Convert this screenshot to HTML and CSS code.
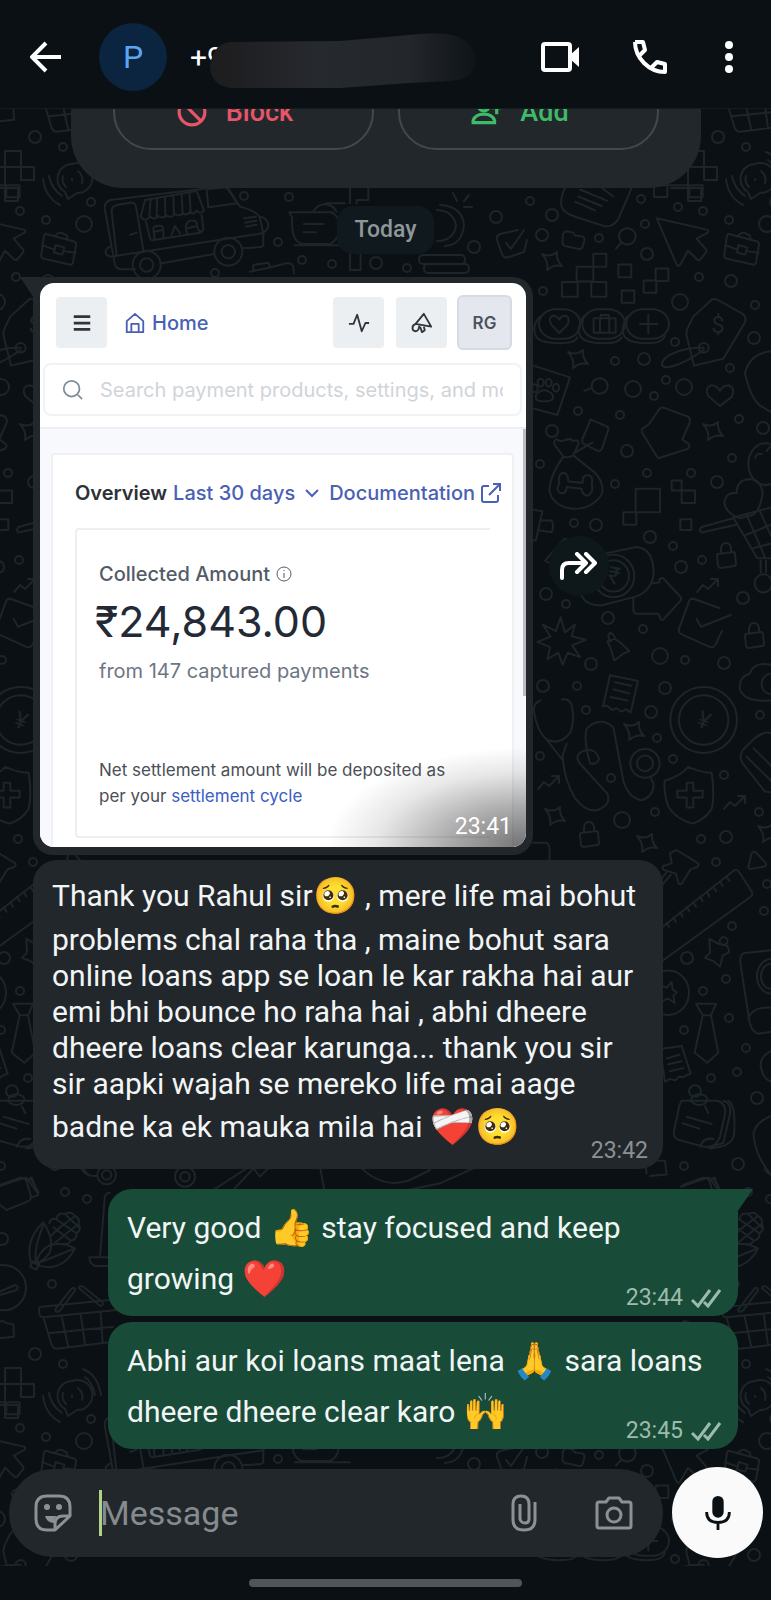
FILE: index.html
```
<!doctype html>
<html lang="en">
<head>
    <meta charset="UTF-8">
    <meta name="viewport" content="width=device-width, initial-scale=1.0">
    <title>Chat</title>
    <link rel="stylesheet" href="styles.css">
</head>
<body>
<header class="topbar">
    <button class="icon-btn" aria-label="Back">
        <svg class="icon-back" viewBox="0 0 32 32"><path d="M31 16H3M16 2L2 16l14 14"/></svg>
    </button>
    <span class="avatar">P</span>
    <h1 class="contact">
        <span>+9</span>
        <svg class="smudge" viewBox="0 0 270 56" aria-hidden="true">
            <defs>
                <linearGradient id="smudge-fill">
                    <stop offset="0" stop-color="#1d1c1f"/>
                    <stop offset=".4" stop-color="#26292e"/>
                    <stop offset=".75" stop-color="#23262a"/>
                    <stop offset="1" stop-color="#0e1418"/>
                </linearGradient>
            </defs>
            <path fill="url(#smudge-fill)" d="M24 9L130 8L210 1Q262-4 266 26Q266 46 240 48L200 50L130 55H22Q0 53 0 32Q4 8 24 9Z"/>
        </svg>
    </h1>
    <nav class="actions">
        <button class="icon-btn" aria-label="Video call">
            <svg class="icon-video" viewBox="0 0 38 30">
                <rect x="2" y="2" width="27" height="26" rx="2"/>
                <path class="solid" d="M29 13l9-8v20l-9-8z"/>
            </svg>
        </button>
        <button class="icon-btn" aria-label="Voice call">
            <svg class="icon-phone" viewBox="0 0 34 34"><path d="M2 2H10L12 10L7 15M2 2Q2 14 11 23Q20 32 32 32V24L24 22L19 27"/></svg>
        </button>
        <button class="icon-btn more" aria-label="More options">
            <svg class="icon-dots" viewBox="0 0 8 32"><circle cx="4" cy="4" r="4"/><circle cx="4" cy="16" r="4"/><circle cx="4" cy="28" r="4"/></svg>
        </button>
    </nav>
</header>

<main class="conversation">
    <svg class="wallpaper" aria-hidden="true">
        <defs>
            <path id="star" d="M-10-7Q-2-3 5-9Q4-1 10 5Q2 3-5 9Q-3 1-10-7Z"/>
            <path id="lock" d="M-8-4L7-6Q9-6 9-4L10 6Q10 8 8 8L-5 10Q-7 10-8 8L-9-2Q-9-4-8-4M-5-5V-10Q-4-15 0-15T5-10L5-6"/>
            <path id="trend" d="M-11 7L-5 0L0 4L10-6M3-6L10-6L10 1"/>
            <g id="doodles">
                <!-- small dots -->
                <g>
                    <circle cx="530" cy="201" r="4"/><circle cx="641" cy="199" r="4"/><circle cx="678" cy="207" r="4"/>
                    <circle cx="703" cy="211" r="4"/><circle cx="645" cy="224" r="4"/><circle cx="729" cy="220" r="4"/>
                    <circle cx="599" cy="238" r="4"/><circle cx="543" cy="291" r="4"/><circle cx="699" cy="277" r="4"/>
                    <circle cx="755" cy="305" r="4"/><circle cx="675" cy="342" r="4"/><circle cx="615" cy="361" r="4"/>
                    <circle cx="666" cy="380" r="4"/><circle cx="654" cy="396" r="4"/><circle cx="730" cy="368" r="4"/>
                    <circle cx="578" cy="411" r="4"/><circle cx="620" cy="415" r="4"/><circle cx="739" cy="419" r="4"/>
                    <circle cx="540" cy="464" r="4"/><circle cx="615" cy="484" r="4"/><circle cx="647" cy="473" r="4"/>
                    <circle cx="691" cy="473" r="4"/><circle cx="732" cy="458" r="4"/><circle cx="574" cy="523" r="4"/>
                    <circle cx="673" cy="546" r="4"/><circle cx="702" cy="560" r="4"/><circle cx="566" cy="604" r="4"/>
                    <circle cx="643" cy="629" r="4"/><circle cx="685" cy="660" r="4"/><circle cx="577" cy="686" r="4"/>
                    <circle cx="586" cy="710" r="4"/><circle cx="657" cy="738" r="4"/><circle cx="540" cy="756" r="4"/>
                    <circle cx="673" cy="759" r="4"/><circle cx="611" cy="778" r="4"/><circle cx="724" cy="775" r="4"/>
                    <circle cx="655" cy="812" r="4"/><circle cx="760" cy="715" r="4"/><circle cx="759" cy="812" r="4"/>
                    <circle cx="701" cy="839" r="4"/><circle cx="716" cy="862" r="4"/><circle cx="767" cy="884" r="4"/>
                    <circle cx="764" cy="911" r="4"/><circle cx="732" cy="926" r="4"/><circle cx="726" cy="979" r="4"/>
                    <circle cx="703" cy="991" r="4"/><circle cx="729" cy="1018" r="4"/><circle cx="684" cy="1030" r="4"/>
                    <circle cx="746" cy="1048" r="4"/><circle cx="737" cy="1072" r="4"/><circle cx="711" cy="1078" r="4"/>
                    <circle cx="684" cy="1166" r="4"/><circle cx="65" cy="1192" r="4"/><circle cx="87" cy="1199" r="4"/>
                    <circle cx="52" cy="1284" r="4"/><circle cx="63" cy="147" r="4"/><circle cx="91" cy="202" r="4"/>
                    <circle cx="244" cy="196" r="4"/><circle cx="289" cy="197" r="4"/><circle cx="278" cy="242" r="4"/>
                    <circle cx="302" cy="260" r="4"/><circle cx="332" cy="264" r="4"/><circle cx="407" cy="268" r="4"/>
                    <circle cx="215" cy="273" r="4"/>
                </g>
                <g>
                    <circle cx="552" cy="215" r="6"/><circle cx="542" cy="235" r="6"/><circle cx="647" cy="254" r="6"/>
                    <circle cx="731" cy="281" r="6"/><circle cx="644" cy="359" r="6"/><circle cx="754" cy="338" r="6"/>
                    <circle cx="552" cy="431" r="6"/><circle cx="627" cy="451" r="6"/><circle cx="717" cy="482" r="6"/>
                    <circle cx="763" cy="428" r="6"/><circle cx="596" cy="525" r="6"/><circle cx="650" cy="537" r="6"/>
                    <circle cx="681" cy="567" r="6"/><circle cx="546" cy="594" r="6"/><circle cx="608" cy="618" r="6"/>
                    <circle cx="743" cy="598" r="6"/><circle cx="591" cy="664" r="6"/><circle cx="724" cy="663" r="6"/>
                    <circle cx="543" cy="686" r="6"/><circle cx="665" cy="688" r="6"/><circle cx="651" cy="712" r="6"/>
                    <circle cx="726" cy="837" r="6"/><circle cx="687" cy="958" r="6"/><circle cx="757" cy="1098" r="6"/>
                    <circle cx="738" cy="1164" r="6"/><circle cx="35" cy="137" r="6"/><circle cx="376" cy="263" r="6"/>
                    <circle cx="496" cy="217" r="6"/><circle cx="474" cy="247" r="6"/><circle cx="2" cy="1239" r="6"/>
                    <circle cx="680" cy="302" r="8"/><circle cx="633" cy="389" r="8"/><circle cx="684" cy="387" r="8"/>
                    <circle cx="660" cy="656" r="8"/><circle cx="622" cy="820" r="8"/><circle cx="84" cy="224" r="8"/>
                </g>

                <use href="#star" x="552" y="261"/><use href="#star" x="578" y="359"/><use href="#star" x="713" y="431"/>
                <use href="#star" x="634" y="731"/><use href="#star" x="555" y="816"/><use href="#star" x="647" y="843"/>
                <use href="#star" x="768" y="833"/>
                <use href="#lock" x="726" y="558"/><use href="#lock" x="754" y="638"/><use href="#lock" x="589" y="837"/>
                <use href="#trend" x="708" y="585"/><use href="#trend" x="549" y="782"/><use href="#trend" x="735" y="802"/>

                <!-- speech bubble with sound waves -->
                <path d="M72 164A15 15 0 1 1 77 193L68 199L65 192A15 15 0 0 1 72 164M78 171q6 5 4 12M66 187q-5-5-3-11M72 179v1M43 179Q45 197 60 205M49 176Q51 188 62 196M83 152Q98 158 101 178M85 160Q93 166 95 178"/>

                <!-- shelf of pixels -->
                <path d="M5 151H21V167H5ZM21 167H34V180H21ZM5 188H18V201H5ZM-12 167H5M-12 188H5V167"/>

                <!-- food van, cup -->
                <g class="thin" transform="translate(20 100) scale(.3333)">
                    <path d="M270 300Q250 310 255 330L285 495Q290 508 305 508H345M270 300L620 258L660 320Q715 335 720 355L730 400V435Q728 442 715 442L668 445M425 490L582 462"/>
                    <path d="M290 468L275 335Q275 318 290 315L330 308Q345 306 348 320L370 450M272 470L728 400M330 405L350 398M560 268L620 262L652 310L565 322ZM270 440Q250 450 260 465L272 470"/>
                    <path d="M375 300L530 273L552 332Q540 345 530 332Q520 345 508 337Q500 348 488 340Q478 352 465 342Q455 356 440 346Q430 358 415 348Q405 362 390 350Q375 368 362 350ZM392 297L388 350M412 294L410 348M435 290L436 346M460 286L462 342M485 282L488 340M508 278L512 337"/>
                    <path d="M378 365L390 415Q392 422 402 420L540 398Q550 395 550 385L545 345M404 418L400 385Q402 375 425 378Q432 385 430 412M402 395L428 390M455 405L465 378L480 400M502 402Q490 372 510 362Q535 360 530 378L540 396M502 385L530 378M672 355L708 350M675 368L710 362M678 380L710 374M720 350Q745 355 745 378Q740 395 728 398"/>
                    <circle cx="380" cy="495" r="42"/><circle cx="380" cy="495" r="20"/>
                    <circle cx="625" cy="455" r="42"/><circle cx="625" cy="455" r="20"/>
                    <path d="M808 337H940M808 337L816 352Q815 400 825 415Q835 432 850 432H930Q952 420 955 400V360Q950 345 935 338M825 436H990M852 372H910M850 397H888M880 335Q890 315 915 312Q940 315 950 335M920 310H975"/>
                    <path d="M990 265V310M990 460V510H1022V460M1010 310V300H1045V265M690 515L740 505L800 490Q815 488 820 500L822 520M700 508V495L745 488L750 500"/>
                </g>
                <path d="M440 205Q462 206 464 225Q462 245 445 246M437 210Q454 211 456 226Q453 241 437 241M453 193l4 8M469 195l-5 6M472 207h-8"/>
                <rect x="419" y="255" width="46" height="9" rx="4"/><rect x="424" y="264" width="45" height="9" rx="4"/>
                <path d="M518 230L500 234Q496 236 497 240L502 254Q504 259 509 257L524 252L527 240M506 243L511 249L524 230"/>

                <!-- shopping, pets, finance -->
                <g class="thin" transform="translate(520 180) scale(.3333 .4337)">
                    <path d="M135 18C110 60 125 75 170 86L255 107Q285 108 298 85L335 18M175 38L245 60M165 50L225 70M180 22L262 48M240 15L280 38"/>
                    <path d="M128 128Q130 118 143 118L160 122L165 128L187 130Q195 132 193 140L188 154Q186 160 178 159L135 152Q126 150 128 143Z"/>
                    <ellipse cx="322" cy="130" rx="25" ry="19"/><path d="M305 144L288 158"/>
                    <path d="M410 88L563 115Q568 118 562 122L530 135L558 160Q562 165 555 170L540 184Q534 186 530 182L504 163L480 196Q474 200 470 195Z"/>
                    <path d="M625 124L712 142Q719 144 717 150L708 190Q705 197 698 195L618 181Q611 179 613 172L621 128ZM615 150L650 160M680 164L716 168M656 150L682 156L676 172L651 167ZM655 128Q665 118 680 124L690 128L692 138"/>
                    <path d="M220 170H259V200H220ZM170 200H220V234H170ZM126 235H173V269H126ZM214 235H259V269H214ZM295 195H334V224H295ZM305 255H343V283H305ZM407 204H445V233H407ZM371 232H409V260H371ZM402 12H442V39H402ZM508 12H548V40H508ZM442 12H508"/>
                    <path d="M347 712H420V766H347ZM310 766H349V795H310ZM455 693H485V716H455ZM485 716H525V745H485ZM481 782H514V807H481Z"/>
                    <rect x="57" y="298" width="124" height="68" rx="50" ry="34"/><rect x="187" y="298" width="128" height="68" rx="50" ry="34"/><rect x="319" y="298" width="128" height="68" rx="50" ry="34"/>
                    <path d="M60 315Q30 340 52 365Q70 378 130 376Q165 376 172 363M190 315Q165 345 184 363Q200 378 260 376Q295 376 305 363M322 315Q297 345 316 363Q332 378 392 376Q425 376 435 360"/>
                    <path d="M118 353L94 334Q84 318 98 313Q112 312 118 322Q124 312 138 313Q152 318 142 334ZM221 319H287V352H221ZM240 319V352M268 319V352M242 319V311H266V319M385 310V354M360 332H412"/>
                    <path d="M520 315L575 276Q585 272 597 278L667 308Q680 315 675 328L610 412L522 428L500 360Q497 350 505 338ZM551 387C500 385 430 400 425 425C430 440 480 430 551 392"/>
                    <ellipse cx="551" cy="387" rx="15" ry="11"/>
                    <path d="M40 428L150 455L112 542L40 527M48 495Q72 475 98 495Q105 512 72 510Q42 512 48 495Z"/>
                    <ellipse cx="62" cy="467" rx="9" ry="9"/><ellipse cx="86" cy="467" rx="9" ry="9"/><ellipse cx="44" cy="480" rx="9" ry="9"/><ellipse cx="108" cy="479" rx="9" ry="9"/>
                    <ellipse cx="239" cy="475" rx="24" ry="18"/><path d="M215 480L193 486"/>
                    <path d="M600 521L565 498Q553 480 572 474Q590 472 600 486Q610 472 628 474Q647 480 635 500Z"/>
                    <path d="M212 552L260 568Q268 572 264 578L246 620Q240 627 232 624L190 608Q184 603 188 596ZM130 638L105 612Q98 600 110 598Q122 605 135 600Q150 594 160 602Q175 596 176 608L160 635Q200 660 225 675Q255 700 245 725Q215 760 155 758Q95 750 88 715Q90 680 130 638Q145 642 160 635M162 630L218 605"/>
                    <path d="M145 695L188 698Q185 682 202 680Q222 682 215 700Q222 720 205 727Q188 730 185 712L140 708Q138 725 122 722Q105 715 118 700Q112 680 128 675Q145 675 145 695Z"/>
                    <path d="M365 575L388 562L418 528Q425 522 435 526L505 546Q512 552 509 560L487 598L508 610Q510 618 500 621L422 640Q415 643 410 637L366 582Z"/>
                    <ellipse cx="737" cy="655" rx="52" ry="48"/><path d="M706 640Q712 628 725 632M740 625L750 615"/>
                    <path d="M660 780Q620 770 613 745Q618 718 650 722Q650 690 690 690Q725 690 728 725Q720 760 700 772Z"/>
                    <path d="M640 778L712 872H753M640 778L753 755M648 795L545 813Q535 808 545 800L640 780M722 878V905M738 878V905M672 820L753 795M695 850L753 838M680 772L735 870M720 764L753 820"/>
                    <ellipse cx="730" cy="930" rx="26" ry="21"/>
                    <path d="M200 870L350 846Q400 850 401 905Q398 945 350 960L250 980Q180 985 175 930M75 878L130 830Q135 826 140 828M75 878L120 895"/>
                    <ellipse cx="281" cy="913" rx="62" ry="49"/><ellipse cx="281" cy="913" rx="46" ry="36"/>
                    <path d="M340 965V992Q342 1000 350 1000H415L422 1012Q428 1018 434 1010L482 970Q486 966 480 960L432 920Q425 914 418 922V928L398 930"/>
                    <path d="M598 987L522 966Q512 963 507 972L477 1035Q474 1043 484 1047L570 1077Q580 1079 586 1072L606 1040M530 1012L543 1030L633 1003"/>
                    <path d="M122 1008L135 1043L165 1025L155 1052L197 1060L157 1073L180 1100L143 1090L128 1118L115 1090L82 1105L90 1077L52 1065L92 1053L68 1025L108 1040Z"/>
                    <path d="M272 1064Q258 1048 272 1044Q285 1050 285 1058L300 1066L328 1086L310 1092L283 1108L272 1080L262 1064L285 1058"/>
                    <path d="M270 1142L354 1155L332 1228L318 1220L305 1226L290 1218L276 1222L262 1212L249 1214ZM285 1158L334 1166M280 1174L328 1184M272 1192L322 1200"/>
                    <ellipse cx="551" cy="1245" rx="100" ry="76"/><ellipse cx="551" cy="1245" rx="74" ry="57"/>
                    <path d="M62 1200Q40 1205 42 1225Q50 1270 80 1290Q120 1305 150 1275Q165 1250 155 1210Q145 1195 125 1198M80 1290L125 1335L140 1300M128 1325Q130 1380 165 1425Q200 1460 235 1452Q275 1440 262 1415L185 1350Q160 1330 185 1318Q225 1305 237 1335Q230 1350 210 1345Q190 1290 200 1265Q240 1235 280 1262L310 1385Q325 1425 365 1430Q405 1420 400 1390L390 1375"/>
                    <ellipse cx="375" cy="1345" rx="44" ry="33"/><ellipse cx="375" cy="1345" rx="24" ry="18"/>
                    <path d="M505 1353Q545 1367 575 1367Q585 1420 575 1450Q555 1475 518 1484Q470 1475 445 1445Q430 1410 434 1385Q480 1375 505 1353ZM500 1390H520V1408H548V1424H520V1447H500V1424H472V1408H500Z"/>
                    <path d="M753 1118Q700 1110 690 1138Q655 1145 660 1175Q675 1205 753 1200M753 1275Q730 1270 700 1290L668 1315Q655 1330 668 1345L735 1410L753 1412M680 1330L753 1385M700 1310L753 1350"/>
                    <ellipse cx="755" cy="1162" rx="30" ry="24"/>
                    <path d="M38 760L67 764L48 830L38 832M62 785H95Q103 800 95 812L60 808M753 395Q690 400 675 445Q690 500 720 520L753 535M38 1528H80Q92 1530 88 1568"/>
                </g>
                <text x="718" y="333">$</text>
                <text x="614" y="584" transform="rotate(10 614 576)">₹</text>
                <text x="704" y="729" transform="rotate(20 704 721)">¥</text>

                <!-- office -->
                <g class="thin" transform="translate(640 850) scale(.3333 .3827)">
                    <path d="M90 8L110 0L175 35Q178 42 170 45L152 50L125 88Q118 92 115 85L108 62L72 52Q64 48 70 42L95 35ZM92 65L60 98M80 58L56 84"/>
                    <path d="M-120 330L280 55Q288 50 295 55L335 108Q340 118 332 122L-60 370M80 190l8 12M100 176l8 12M120 162l8 12M140 149l8 12M160 136l8 12M180 122l8 12M200 109l8 12M220 96l8 12M240 82l8 12M260 69l8 12"/>
                    <path d="M208 232L235 245L262 250L268 266L248 276L240 305L220 290L195 282L210 268Z"/><ellipse cx="251" cy="238" rx="12" ry="10"/>
                    <ellipse cx="85" cy="373" rx="62" ry="58"/><path d="M66 355L80 360L95 345L98 365L110 372L100 380L104 400L85 388L66 395"/>
                    <path d="M168 402H228L213 432L235 530L202 556L164 530L188 432ZM188 432H213"/>
                    <path d="M60 520L125 512L152 585L140 588L130 594L118 592L105 602L90 598L75 605ZM80 545L118 535M85 560L125 552M90 578L130 570"/>
                    <path d="M125 655H232Q260 662 255 690L240 750Q225 780 190 775L115 757Q98 750 102 735L118 668ZM250 655Q275 660 270 690L250 765L205 778M265 655Q288 665 282 745Q275 775 210 780M140 697L215 716M128 714L178 728M180 775Q190 750 220 755M195 670L205 688"/>
                    <ellipse cx="165" cy="630" rx="18" ry="15"/><ellipse cx="178" cy="652" rx="24" ry="14"/>
                    <path d="M393 262L310 270Q298 275 302 300L325 430Q330 475 355 480L393 475M325 440Q335 410 393 412"/>
                    <ellipse cx="393" cy="330" rx="42" ry="45"/><ellipse cx="393" cy="330" rx="30" ry="33"/>
                    <path d="M325 45L335 8Q340 2 350 8L378 35Q380 42 370 44L330 50ZM393 525Q360 540 362 565Q370 600 393 605M393 695Q350 710 340 740Q345 800 393 848M20 845L15 820M40 812H75L80 848L30 852M122 880L200 857Q212 855 215 865L240 895M220 858L245 895"/>
                </g>

                <!-- corn, basket, laptop -->
                <g class="thin" transform="translate(0 1140) scale(.3333)">
                    <path d="M92 365Q75 300 130 247Q165 300 148 340Q115 380 92 365M108 370Q100 330 130 255M108 372Q115 335 150 315Q190 305 225 325Q200 375 150 382Q120 380 108 372L220 327M98 364L118 374L108 389L90 380Z"/>
                    <path d="M148 250Q150 232 170 238Q172 216 195 222Q215 212 225 228Q240 235 236 252Q246 268 230 280Q230 300 212 302Q205 316 188 312M160 262L210 300M172 240L230 280M195 222L236 262M150 290L180 262L225 228M165 308L200 280L236 252"/>
                    <path d="M118 510Q115 500 125 500L350 478M118 510Q115 530 130 532L350 510M130 532L155 615Q160 626 170 626L340 605M185 530L205 622M242 522L255 615M302 518L308 608M145 580L340 560M165 510L215 445Q225 440 225 452L180 512Q170 520 165 510M237 445L300 497Q312 498 308 487L250 440Q238 435 237 445"/>
                    <path d="M330 158Q315 160 314 175L300 350M268 352H330V378H285Q268 370 268 352M0 135L60 113Q75 112 80 125L92 165Q95 180 82 185L20 210L0 195M80 122L95 112L115 165L95 172"/>
                    <circle cx="10" cy="443" r="68"/><path d="M0 455L45 435Q58 440 50 450L0 465M0 545Q10 540 20 550L40 553L42 590L0 595"/>
                    <circle cx="320" cy="105" r="28"/><circle cx="320" cy="105" r="14"/><circle cx="555" cy="110" r="30"/><circle cx="555" cy="110" r="14"/>
                    <path d="M245 88Q260 110 290 108M640 150L740 85M700 150L760 85L780 110L820 70M960 80L975 160M1080 80Q1150 150 1230 120L1290 90M1180 160L1320 130L1420 85"/>
                </g>
            </g>
        </defs>
        <!-- the artwork repeats every 683 x 1217, coordinates are page based -->
        <g transform="translate(0 -109)">
            <use href="#doodles" x="-683" y="-1217"/><use href="#doodles" y="-1217"/><use href="#doodles" x="683" y="-1217"/>
            <use href="#doodles" x="-683"/><use href="#doodles"/><use href="#doodles" x="683"/>
            <use href="#doodles" x="-683" y="1217"/><use href="#doodles" y="1217"/><use href="#doodles" x="683" y="1217"/>
        </g>
    </svg>

    <div class="messages">
        <section class="contact-card">
            <button class="pill-btn block">
                <svg viewBox="0 0 28 28"><circle cx="14" cy="14" r="12"/><path d="M6 6l16 16"/></svg>
                Block
            </button>
            <button class="pill-btn add">
                <svg viewBox="0 0 28 28"><circle cx="12" cy="8" r="5"/><path d="M2 24V22Q4 16 12 16T22 22V24ZM24 5v11M19 10h9"/></svg>
                Add
            </button>
        </section>

        <time class="day">Today</time>

        <div class="row">
            <article class="bubble photo in tail-left">
                <div class="shot">
                    <div class="shot-top">
                        <button class="tile menu" aria-label="Menu"><svg viewBox="0 0 24 24"><path d="M3 5h18M3 12h18M3 19h18"/></svg></button>
                        <a class="home" href="#">
                            <svg viewBox="0 0 24 24"><path d="M3 10l9-8 9 8v12H3zM8 22v-9h8v9"/></svg>
                            Home
                        </a>
                        <button class="tile push" aria-label="Activity"><svg viewBox="0 0 24 24"><path d="M1 13h5l4-10 5 18 4-9h4"/></svg></button>
                        <button class="tile" aria-label="Announcements"><svg viewBox="0 0 24 24"><path d="M14 2l8 14L5 13zM5 13c-5 2-4 8 0 8 3 0 4-3 4-7M10 16l2 6 3-2-1-4"/></svg></button>
                        <button class="tile user">RG</button>
                    </div>
                    <label class="shot-search">
                        <svg viewBox="0 0 24 24"><circle cx="11" cy="11" r="9"/><path d="M18 18l5 5"/></svg>
                        <input type="text" placeholder="Search payment products, settings, and more" aria-label="Search payments">
                    </label>
                    <div class="shot-body">
                        <div class="panel">
                            <div class="panel-head">
                                <strong>Overview</strong>
                                <a href="#">Last 30 days</a>
                                <svg class="chev" viewBox="0 0 14 14"><path d="M1 4l6 6 6-6"/></svg>
                                <a href="#">Documentation</a>
                                <svg class="ext" viewBox="0 0 20 20"><path d="M8 3H3Q1 3 1 5v12q0 2 2 2h12q2 0 2-2v-5M12 1h7v7M19 1L8 12"/></svg>
                            </div>
                            <div class="stat">
                                <h2>Collected Amount <svg viewBox="0 0 16 16"><circle cx="8" cy="8" r="7"/><path d="M8 7v5M8 4v1"/></svg></h2>
                                <p class="amount">₹24,843.00</p>
                                <p class="captured">from 147 captured payments</p>
                                <p class="net">Net settlement amount will be deposited as per your <a href="#">settlement cycle</a></p>
                            </div>
                        </div>
                    </div>
                </div>
                <time class="stamp on-photo">23:41</time>
            </article>
            <button class="forward" aria-label="Forward">
                <svg viewBox="0 0 38 28"><path d="M2 26V18Q2 11 9 11H25M17 2l9 9-9 9M26 2l9 9-9 9"/></svg>
            </button>
        </div>

        <article class="bubble in long">
            <p>Thank you Rahul sir<span class="emoji">🥺</span> , mere life mai bohut problems chal raha tha , maine bohut sara online loans app se loan le kar rakha hai aur emi bhi bounce ho raha hai , abhi dheere dheere loans clear karunga... thank you sir sir aapki wajah se mereko life mai aage badne ka ek mauka mila hai <span class="emoji">❤️‍🩹🥺</span></p>
            <time class="stamp">23:42</time>
        </article>

        <article class="bubble out first tail-right">
            <p>Very good <span class="emoji">👍</span> stay focused and keep growing <span class="emoji">❤️</span></p>
            <span class="stamp"><time>23:44</time>
                <svg viewBox="0 0 30 20"><path d="M1 12l6 6L19 2M13 14l4 4L29 2"/></svg>
            </span>
        </article>

        <article class="bubble out">
            <p>Abhi aur koi loans maat lena <span class="emoji">🙏</span> sara loans dheere dheere clear karo <span class="emoji">🙌</span></p>
            <span class="stamp"><time>23:45</time>
                <svg viewBox="0 0 30 20"><path d="M1 12l6 6L19 2M13 14l4 4L29 2"/></svg>
            </span>
        </article>
    </div>

    <form class="composer">
        <div class="field">
            <button type="button" class="icon-btn" aria-label="Stickers">
                <svg viewBox="0 0 38 38">
                    <path d="M36 20V13Q36 2 25 2H13Q2 2 2 13V25Q2 36 13 36H21L36 22V20M21 36V30Q21 22 29 22H36"/>
                    <circle class="solid" cx="13" cy="13" r="3"/><circle class="solid" cx="25" cy="13" r="3"/>
                    <path class="solid" d="M11 22H23Q20 24 20 29Q13 29 11 22Z"/>
                </svg>
            </button>
            <span class="caret"></span>
            <input type="text" placeholder="Message" aria-label="Message">
            <button type="button" class="icon-btn clip" aria-label="Attach">
                <svg viewBox="0 0 26 38"><path d="M24 8V26Q24 36 13 36T2 26V10Q2 2 10 2T18 10V25Q18 29 14 29T9 25V10"/></svg>
            </button>
            <button type="button" class="icon-btn" aria-label="Camera">
                <svg viewBox="0 0 38 38"><path d="M4 8H11L14 4H24L27 8H34Q36 8 36 10V32Q36 34 34 34H4Q2 34 2 32V10Q2 8 4 8Z"/><circle cx="19" cy="21" r="7"/></svg>
            </button>
        </div>
        <button type="button" class="mic" aria-label="Voice message">
            <svg viewBox="0 0 28 38"><rect class="solid" x="8" y="1" width="12" height="23" rx="6"/><path d="M2 18Q2 29 14 29T26 18M14 29v8"/></svg>
        </button>
    </form>
</main>

<footer class="gesture"><span></span></footer>
</body>
</html>
```

FILE: styles.css
```
:root {
    --bg: #0a1014;
    --surface: #22272b;
    --out: #184c38;
    --muted: #8b9194;
    --link: #4a5fb5;
    --doodle: #1e2529;
}

* {
    box-sizing: border-box;
}

body {
    margin: 0;
    height: 100vh;
    display: flex;
    flex-direction: column;
    background: var(--bg);
    color: #f2f5f6;
    font-family: Roboto, sans-serif;
}

button, input {
    border: none;
    padding: 0;
    background: none;
    font: inherit;
    color: inherit;
}

button {
    cursor: pointer;
}

a {
    color: var(--link);
    text-decoration: none;
}

svg {
    display: block;
    fill: none;
    stroke: currentColor;
}

svg .solid {
    fill: currentColor;
    stroke: none;
}

p, h1, h2 {
    margin: 0;
    font-weight: normal;
}

/* top bar */
.topbar {
    display: flex;
    align-items: center;
    height: 109px;
    flex: none;
    padding: 6px 38px 0 30px;
    border-bottom: 1px solid #151c20;
    color: #fff;
}

.icon-back {
    width: 32px;
    height: 32px;
    stroke-width: 4;
}

.avatar {
    width: 68px;
    height: 68px;
    margin-left: 37px;
    border-radius: 50%;
    background: #0b2440;
    color: #5aa5f5;
    font-size: 32px;
    line-height: 68px;
    text-align: center;
}

.contact {
    display: flex;
    flex: 1;
    align-items: center;
    margin-left: 23px;
    font-size: 30px;
}

.smudge {
    width: 270px;
    height: 56px;
    margin: 8px 0 0 -14px;
    stroke: none;
}

.actions {
    display: flex;
    align-items: center;
    gap: 54px;
}

.more {
    margin-left: 4px;
}

.icon-video {
    width: 38px;
    height: 30px;
    stroke-width: 4;
}

.icon-phone {
    width: 34px;
    height: 34px;
    stroke-width: 4;
    stroke-linejoin: round;
}

.icon-dots {
    width: 8px;
    height: 32px;
    fill: currentColor;
    stroke: none;
}

/* conversation */
.conversation {
    position: relative;
    display: flex;
    flex: 1;
    flex-direction: column;
    min-height: 0;
    overflow: hidden;
}

.wallpaper {
    position: absolute;
    inset: 0;
    width: 100%;
    height: 100%;
    stroke: var(--doodle);
    stroke-width: 2;
    stroke-linejoin: round;
    stroke-linecap: round;
}

.wallpaper .thin > * {
    vector-effect: non-scaling-stroke;
}

.wallpaper text {
    fill: var(--doodle);
    stroke: none;
    font-size: 24px;
    text-anchor: middle;
}

.messages {
    position: relative;
    display: flex;
    flex: 1;
    flex-direction: column;
    justify-content: flex-end;
    min-height: 0;
    padding: 0 33px 18px;
}

.contact-card {
    display: flex;
    flex: none;
    gap: 24px;
    width: 630px;
    max-width: 100%;
    margin: 0 auto 18px;
    padding: 100px 42px 38px;
    border-radius: 52px;
    background: var(--surface);
}

.pill-btn {
    display: flex;
    flex: 1;
    align-items: center;
    justify-content: center;
    gap: 19px;
    height: 76px;
    padding-right: 16px;
    border: 2px solid #43484c;
    border-radius: 38px;
    font-size: 27px;
    font-weight: 500;
}

.pill-btn svg {
    width: 30px;
    height: 30px;
    stroke-width: 3;
}

.block {
    color: #e85568;
}

.add {
    color: #3dbb68;
}

.day {
    align-self: center;
    flex: none;
    margin-bottom: 23px;
    padding: 0 18px;
    border-radius: 16px;
    background: #10191d;
    color: #8f979a;
    font-size: 23px;
    font-weight: 500;
    line-height: 48px;
}

.row {
    display: flex;
    flex: none;
    align-items: center;
    gap: 16px;
    margin-bottom: 5px;
}

.forward {
    width: 60px;
    height: 60px;
    display: grid;
    place-items: center;
    border-radius: 50%;
    background: #0e181b;
    color: #fff;
}

.forward svg {
    width: 38px;
    height: 28px;
    stroke-width: 4;
    stroke-linecap: round;
    stroke-linejoin: round;
}

.bubble {
    position: relative;
    display: grid;
    flex: none;
    width: 630px;
    max-width: 100%;
    border-radius: 24px;
    font-size: 30px;
    line-height: 36px;
}

.bubble > * {
    grid-area: 1 / 1;
}

.in {
    background: var(--surface);
}

.out {
    align-self: flex-end;
    margin-bottom: 6px;
    padding: 13px 19px 12px;
    background: var(--out);
    line-height: 51px;
}

.out:last-child {
    margin-bottom: 0;
}

.long {
    margin-bottom: 20px;
    padding: 11px 19px 16px;
}

.emoji {
    font-size: 36px;
    line-height: 44px;
    vertical-align: -2px;
}

.long .emoji {
    line-height: 51px;
}

.tail-left::before,
.tail-right::after {
    content: "";
    position: absolute;
    top: 0;
    width: 36px;
    height: 22px;
}

.tail-left::before {
    left: -13px;
    background: var(--surface);
    clip-path: polygon(0 0, 100% 0, 100% 100%, 40% 100%);
}

.tail-right::after {
    right: -15px;
    background: var(--out);
    clip-path: polygon(0 0, 100% 0, 58% 100%, 0 100%);
}

.stamp {
    display: flex;
    align-self: end;
    align-items: center;
    justify-self: end;
    gap: 8px;
    color: var(--muted);
    font-size: 23px;
    line-height: 24px;
}

.long .stamp {
    margin: 0 -4px -10px 0;
}

.out .stamp {
    margin: 0 -2px -6px 0;
    color: #9dbbad;
}

.stamp svg {
    width: 30px;
    height: 20px;
    stroke-width: 3;
}

/* photo message */
.photo {
    width: 500px;
    padding: 6px 7px 8px;
    border-radius: 20px;
}

.on-photo {
    position: relative;
    margin: 0 14px 8px 0;
    color: #fff;
}

.shot {
    position: relative;
    min-width: 0;
    height: 564px;
    overflow: hidden;
    border-radius: 14px;
    background: #fff;
    font-family: Inter, sans-serif;
    font-size: 20px;
    font-weight: 500;
    line-height: 24px;
}

.shot::after {
    content: "";
    position: absolute;
    inset: 0;
    background: radial-gradient(ellipse 200px 100px at 100% 100%, rgba(30, 30, 30, .62), rgba(50, 50, 50, .4) 40%, rgba(60, 60, 60, .12) 75%, transparent);
    pointer-events: none;
}

.shot-top {
    display: flex;
    align-items: center;
    gap: 12px;
    padding: 12px 14px 0 16px;
}

.tile {
    display: grid;
    place-items: center;
    width: 51px;
    height: 51px;
    border-radius: 4px;
    background: #eceff2;
    color: #2f353d;
}

.tile svg {
    width: 22px;
    height: 22px;
    stroke-width: 2;
    stroke-linejoin: round;
}

.menu svg {
    stroke-width: 3;
}

.push {
    margin-left: auto;
}

.user {
    width: 55px;
    height: 55px;
    margin-left: -2px;
    border: 2px solid #d6dae2;
    border-radius: 6px;
    background: #e4e7ed;
    color: #4c535e;
    font-size: 17px;
    font-weight: 600;
}

.home {
    display: flex;
    align-items: center;
    gap: 6px;
    margin-left: 5px;
}

.home svg {
    width: 22px;
    height: 22px;
    stroke-width: 2;
    stroke-linejoin: round;
}

.shot-search {
    display: flex;
    align-items: center;
    gap: 17px;
    height: 53px;
    margin: 13px 4px 11px 3px;
    padding: 0 17px;
    border: 2px solid #f0f2f4;
    border-radius: 8px;
}

.shot-search svg {
    flex: none;
    width: 21px;
    height: 21px;
    color: #7f8b97;
    stroke-width: 2;
}

.shot-search input {
    flex: 1;
    min-width: 0;
    font-weight: 400;
}

.shot-search input::placeholder {
    color: #d0d4d9;
    opacity: 1;
}

.shot-body {
    padding: 24px 12px 0 11px;
    border-top: 2px solid #eceef1;
    background: linear-gradient(#b9bdc1, #b9bdc1) right top / 3px 267px no-repeat, #f8f9fc;
}

.panel {
    height: 420px;
    padding: 26px 0 0 22px;
    border: 2px solid #eef0f2;
    border-bottom: none;
    border-radius: 4px 4px 0 0;
    background: #fff;
}

.panel-head {
    display: flex;
    align-items: center;
    gap: 6px;
    color: #2c3137;
    white-space: nowrap;
}

.panel-head strong {
    font-weight: 600;
}

.panel-head svg {
    flex: none;
    color: var(--link);
    stroke-width: 2;
}

.chev {
    width: 14px;
    height: 14px;
    margin: 0 4px;
}

.ext {
    width: 20px;
    height: 20px;
}

.stat {
    height: 310px;
    margin: 23px 22px 0 0;
    padding: 32px 20px 0 22px;
    border: solid #eceef0;
    border-width: 2px 0 2px 2px;
    border-radius: 4px 0 0 4px;
}

.stat h2 {
    display: flex;
    align-items: center;
    gap: 6px;
    color: #525b67;
    font-size: 20px;
    font-weight: 500;
}

.stat h2 svg {
    width: 16px;
    height: 16px;
}

.amount {
    margin: 9px 0 12px -4px;
    color: #232a35;
    font-size: 43px;
    font-weight: 400;
    line-height: 52px;
}

.captured {
    color: #6d7682;
    font-weight: 400;
}

.net {
    margin-top: 74px;
    color: #4a4f57;
    font-size: 17px;
    font-weight: 400;
    line-height: 26px;
}

.net a {
    color: #3a5cc5;
}

/* composer */
.composer {
    position: relative;
    display: flex;
    flex: none;
    align-items: center;
    gap: 9px;
    padding: 0 8px 8px 9px;
}

.field {
    display: flex;
    flex: 1;
    align-items: center;
    min-width: 0;
    height: 88px;
    padding: 0 30px 0 25px;
    border-radius: 44px;
    background: var(--surface);
    color: #8b9194;
}

.field svg {
    width: 38px;
    height: 38px;
    stroke-width: 3;
    stroke-linejoin: round;
}

.field .clip svg {
    width: 26px;
}

.clip {
    margin-right: 58px;
}

.caret {
    width: 3px;
    height: 46px;
    margin-left: 27px;
    background: #b4d286;
}

.field input {
    flex: 1;
    min-width: 0;
    margin-left: -2px;
    font-size: 34px;
    outline: none;
}

.field input::placeholder {
    color: #858b8e;
    opacity: 1;
}

.mic {
    display: grid;
    place-items: center;
    width: 91px;
    height: 91px;
    border-radius: 50%;
    background: #fafafa;
    color: #0a1014;
}

.mic svg {
    width: 28px;
    height: 36px;
    stroke-width: 3;
}

.gesture {
    display: flex;
    flex: none;
    justify-content: center;
    height: 34px;
    padding-top: 13px;
}

.gesture span {
    width: 273px;
    height: 8px;
    border-radius: 4px;
    background: #4f5659;
}
```
